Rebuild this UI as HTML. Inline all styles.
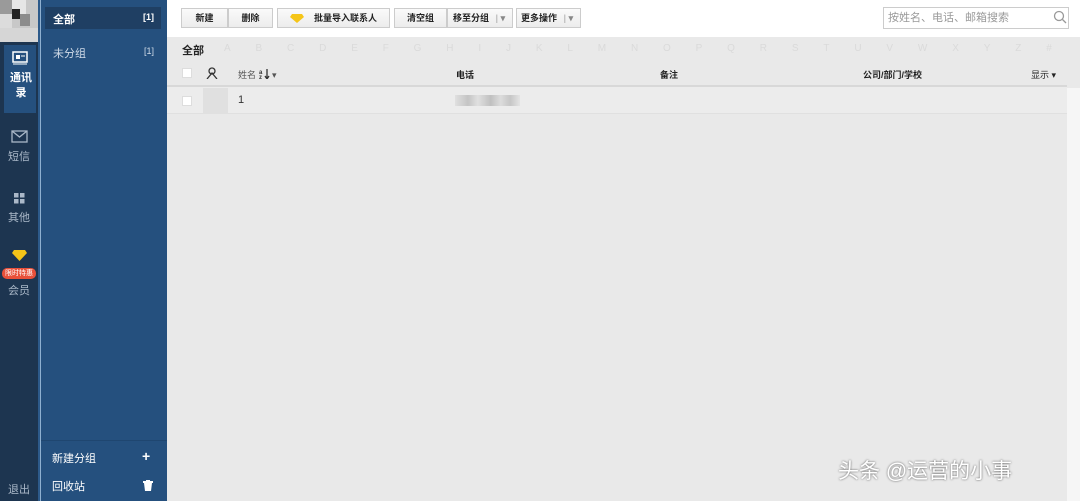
<!DOCTYPE html>
<html><head><meta charset="utf-8"><style>
*{margin:0;padding:0;box-sizing:border-box}
body{width:1080px;height:501px;overflow:hidden;background:#e9e9e9;font-family:"Liberation Sans","Noto Sans CJK SC",sans-serif;font-size:10px;position:relative}
.a{position:absolute}
.nav{left:0;top:0;width:38px;height:501px;background:#1d3550}
.line{left:38px;top:0;width:3px;height:501px;background:#2d5a8a}
.line2{left:40px;top:0;width:1px;height:501px;background:#8fb0d0}
.panel{left:41px;top:0;width:126px;height:501px;background:#25507e}
.ni{color:#aab8c8;font-size:11px;text-align:center;width:38px;left:0}
.btn{top:8px;height:20px;border:1px solid #ccc;background:linear-gradient(#fafafa,#ececec);font-size:9px;color:#222;text-align:center;line-height:18px;font-weight:bold}
.hd{font-size:9px;color:#222;font-weight:bold}
.cb{width:10px;height:10px;background:#fff;border:1px solid #ddd}
</style></head><body>
<div class="a nav"></div>
<div class="a" style="left:0;top:0;width:38px;height:42px;background:#c8c8c8"></div>
<div class="a" style="left:0;top:0;width:12px;height:14px;background:#9a9a9a"></div>
<div class="a" style="left:12px;top:0;width:14px;height:14px;background:#e6e6e6"></div>
<div class="a" style="left:12px;top:9px;width:8px;height:10px;background:#222"></div>
<div class="a" style="left:0;top:14px;width:12px;height:14px;background:#dcdcdc"></div>
<div class="a" style="left:20px;top:14px;width:10px;height:12px;background:#8c8c8c"></div>
<div class="a" style="left:0;top:28px;width:38px;height:14px;background:#d6d6d6"></div>
<div class="a" style="left:4px;top:45px;width:32px;height:68px;background:#25507e"></div>
<svg class="a" style="left:12px;top:51px" width="16" height="14"><rect x="1" y="1" width="14" height="10" fill="none" stroke="#fff" stroke-width="1.5"/><rect x="4" y="4" width="4" height="4" fill="#fff"/><line x1="9" y1="5" x2="13" y2="5" stroke="#fff"/><line x1="1" y1="13" x2="15" y2="13" stroke="#fff"/></svg>
<div class="a ni" style="top:71px;left:2px;color:#fff;font-weight:bold;font-size:11px;line-height:15px">通讯<br>录</div>
<svg class="a" style="left:11px;top:130px" width="17" height="13"><rect x="1" y="1" width="15" height="11" fill="none" stroke="#aab8c8" stroke-width="1.3"/><path d="M1 1 L8.5 7 L16 1" fill="none" stroke="#aab8c8" stroke-width="1.3"/></svg>
<div class="a ni" style="top:148px">短信</div>
<svg class="a" style="left:14px;top:193px" width="11" height="11" fill="#aab8c8"><rect x="0" y="0" width="4.5" height="4.5"/><rect x="6" y="0" width="4.5" height="4.5"/><rect x="0" y="6" width="4.5" height="4.5"/><rect x="6" y="6" width="4.5" height="4.5"/></svg>
<div class="a ni" style="top:209px">其他</div>
<svg class="a" style="left:11px;top:249px" width="17" height="13"><path d="M3 1 H14 L16 4 L8.5 12 L1 4 Z" fill="#f5c518"/></svg>
<div class="a" style="left:2px;top:268px;width:34px;height:11px;background:#e8503a;border-radius:5px;color:#fff;font-size:7px;text-align:center;line-height:11px">限时特惠</div>
<div class="a ni" style="top:282px">会员</div>
<div class="a ni" style="top:481px">退出</div>
<div class="a line"></div><div class="a line2"></div>
<div class="a panel"></div>
<div class="a" style="left:45px;top:7px;width:116px;height:22px;background:#1f3f63"></div>
<div class="a" style="left:53px;top:11px;color:#fff;font-weight:bold;font-size:11px">全部</div>
<div class="a" style="left:143px;top:12px;color:#fff;font-weight:bold;font-size:9px">[1]</div>
<div class="a" style="left:53px;top:45px;color:#d0dbe8;font-size:11px">未分组</div>
<div class="a" style="left:144px;top:46px;color:#d0dbe8;font-size:9px">[1]</div>
<div class="a" style="left:41px;top:440px;width:126px;height:1px;background:#1f4670"></div>
<div class="a" style="left:52px;top:450px;color:#fff;font-size:11px">新建分组</div>
<div class="a" style="left:142px;top:448px;color:#fff;font-size:14px;font-weight:bold">+</div>
<div class="a" style="left:52px;top:478px;color:#fff;font-size:11px">回收站</div>
<svg class="a" style="left:143px;top:480px" width="10" height="11"><rect x="0" y="1" width="10" height="2" fill="#fff"/><rect x="3" y="0" width="4" height="2" fill="#fff"/><path d="M1 3 H9 L8 11 H2 Z" fill="#fff"/></svg>
<div class="a" style="left:167px;top:0;width:913px;height:37px;background:#fff"></div>
<div class="a btn" style="left:181px;width:47px">新建</div>
<div class="a btn" style="left:228px;width:45px">删除</div>
<div class="a btn" style="left:277px;width:113px"><svg style="vertical-align:middle;margin-right:10px" width="14" height="9"><path d="M2 0 H12 L14 3 L7 9 L0 3 Z" fill="#f5c518"/></svg>批量导入联系人</div>
<div class="a btn" style="left:394px;width:53px">清空组</div>
<div class="a btn" style="left:447px;width:66px;text-align:left;padding-left:5px">移至分组 <span style="color:#bbb;margin-left:4px">|</span> <span style="color:#888">▾</span></div>
<div class="a btn" style="left:516px;width:65px;text-align:left;padding-left:4px">更多操作 <span style="color:#bbb;margin-left:4px">|</span> <span style="color:#888">▾</span></div>
<div class="a" style="left:883px;top:7px;width:186px;height:22px;border:1px solid #ccc;background:#fff;color:#999;font-size:11px;line-height:20px;padding-left:4px">按姓名、电话、邮箱搜索</div>
<svg class="a" style="left:1053px;top:10px" width="14" height="14"><circle cx="6" cy="6" r="4.5" fill="none" stroke="#999" stroke-width="1.3"/><line x1="9.5" y1="9.5" x2="13" y2="13" stroke="#999" stroke-width="1.3"/></svg>
<div class="a" style="left:182px;top:42px;font-size:11px;font-weight:bold;color:#222">全部</div>
<div class="a" style="left:224px;top:43px;color:#dadada;font-size:10px;display:flex;width:828px;justify-content:space-between"><span>A</span><span>B</span><span>C</span><span>D</span><span>E</span><span>F</span><span>G</span><span>H</span><span>I</span><span>J</span><span>K</span><span>L</span><span>M</span><span>N</span><span>O</span><span>P</span><span>Q</span><span>R</span><span>S</span><span>T</span><span>U</span><span>V</span><span>W</span><span>X</span><span>Y</span><span>Z</span><span>#</span></div>
<div class="a cb" style="left:182px;top:68px"></div>
<svg class="a" style="left:206px;top:67px" width="12" height="12"><circle cx="6" cy="4" r="3" fill="none" stroke="#333" stroke-width="1.3"/><path d="M1 12 L6 6 L11 12" fill="none" stroke="#333" stroke-width="1.3"/></svg>
<div class="a hd" style="left:238px;top:68px;font-weight:normal;color:#555">姓名 <svg width="11" height="10" style="vertical-align:-1px"><text x="0" y="5" font-size="6" font-weight="bold" fill="#333" font-family="Liberation Sans">a</text><text x="0" y="10" font-size="6" font-weight="bold" fill="#333" font-family="Liberation Sans">z</text><path d="M8 0 V9 M6 7 L8 10 L10 7" stroke="#333" stroke-width="1.3" fill="none"/></svg> ▾</div>
<div class="a hd" style="left:456px;top:68px">电话</div>
<div class="a hd" style="left:660px;top:68px">备注</div>
<div class="a hd" style="left:863px;top:68px">公司/部门/学校</div>
<div class="a hd" style="left:1031px;top:68px;font-weight:normal">显示 ▾</div>
<div class="a" style="left:167px;top:85px;width:900px;height:2px;background:#d8d8d8"></div>
<div class="a" style="left:167px;top:87px;width:900px;height:27px;background:#ececec;border-bottom:1px solid #e0e0e0"></div>
<div class="a cb" style="left:182px;top:96px"></div>
<div class="a" style="left:203px;top:88px;width:25px;height:25px;background:#e0e0e0"></div>
<div class="a" style="left:238px;top:94px;font-size:11px;color:#333">1</div>
<div class="a" style="left:455px;top:95px;width:65px;height:11px;background:linear-gradient(90deg,#e0e0e0,#c4c4c4 20%,#e0e0e0 35%,#c0c0c0 55%,#dcdcdc 70%,#c6c6c6 85%,#e4e4e4)"></div>
<div class="a" style="left:1067px;top:37px;width:13px;height:51px;background:#e9e9e9"></div>
<div class="a" style="left:1067px;top:88px;width:13px;height:413px;background:#f6f6f6"></div>
<div class="a" style="left:838px;top:455px;font-size:21px;color:#fff;text-shadow:0 0 2px #555">头条 @运营的小事</div>
</body></html>
